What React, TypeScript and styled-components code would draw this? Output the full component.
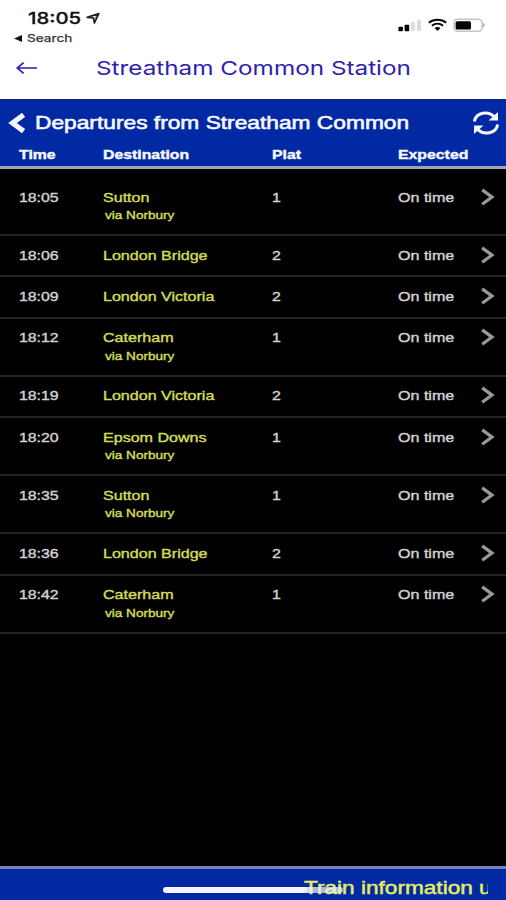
import React from "react";
import styled, { createGlobalStyle } from "styled-components";

const GlobalStyle = createGlobalStyle`
  * { box-sizing: border-box; }
  body { margin: 0; background: #fff; }
`;

const Screen = styled.div`
  width: 506px;
  height: 900px;
  display: flex;
  flex-direction: column;
  overflow: hidden;
  background: #fff;
  font-family: "Liberation Sans", Arial, sans-serif;
`;

const Wide = styled.span<{ $size: number; $stretch?: number; $stroke?: number }>`
  display: block;
  width: max-content;
  white-space: nowrap;
  font-size: ${(p) => p.$size}px;
  line-height: 20px;
  transform: scaleX(${(p) => p.$stretch ?? 1.19});
  transform-origin: left center;
  -webkit-text-stroke: ${(p) => p.$stroke ?? 0.4}px currentColor;
`;

const StatusBar = styled.div`
  height: 48px;
  padding: 8px 20px 0 14px;
  display: flex;
  justify-content: space-between;
  font-family: Inter, sans-serif;
  color: #111;
`;

const Clock = styled.div`
  display: flex;
  height: 21px;
  padding-left: 14px;
  font-weight: 500;
  svg { margin: 4px 0 0 16px; }
`;

const BackToApp = styled.div`
  display: flex;
  align-items: center;
  height: 19px;
  gap: 4px;
  color: #333;
`;

const Indicators = styled.div`
  display: flex;
  padding-top: 9px;
  height: 28px;
  gap: 6px;
`;

const NavBar = styled.div`
  height: 51px;
  display: flex;
  align-items: center;
  padding: 0 0 11px 16px;
  color: #2c22ae;
  font-family: Inter, sans-serif;
`;

const NavTitle = styled.div`
  margin: 1px 0 0 57.5px;
`;

const BoardHeader = styled.header`
  height: 70px;
  background: #0029a3;
  color: #f6f8ff;
  border-top: 1px solid #10207f;
  border-bottom: 3px solid #a0a3b6;
`;

const BoardTitle = styled.div`
  display: flex;
  align-items: center;
  height: 45px;
  padding: 1px 6px 0 8px;
`;

const TitleText = styled.div`
  flex: 1;
  padding-left: 8.5px;
`;

const columns = "84px 169px 126px 76px 1fr";

const ColumnTitles = styled.div`
  display: grid;
  grid-template-columns: ${columns};
  padding-left: 19px;
  font-weight: bold;
`;

const Board = styled.main`
  flex: 1;
  background: #000;
  padding-top: 9px;
`;

const Row = styled.div<{ $tall: boolean }>`
  display: grid;
  grid-template-columns: ${columns};
  align-content: start;
  height: ${(p) => (p.$tall ? 58.2 : 41.2)}px;
  padding: 9.6px 0 0 19px;
  border-bottom: 2px solid #242424;
  color: #d2d2d2;
`;

const Destination = styled.div`
  color: #d3dc58;
`;

const Via = styled.div`
  padding-left: 2px;
  margin-top: -2.4px;
`;

const ChevronCell = styled.div`
  padding: 0 0 0 6px;
  height: 20px;
`;

const Footer = styled.footer`
  height: 34px;
  background: #0029a3;
  border-top: 3px solid #7580b4;
  position: relative;
  padding: 9px 18px 0 304px;
`;

const Ticker = styled.div`
  overflow: hidden;
  color: #e5ec62;
`;

const HomeIndicator = styled.div`
  position: absolute;
  left: 163px;
  top: 18px;
  width: 180px;
  height: 6px;
  border-radius: 3px;
  background: linear-gradient(90deg, #f7f7ff 78%, rgba(240, 240, 235, 0.72) 84%);
`;

const departures: { time: string; to: string; via?: string; plat: string }[] = [
  { time: "18:05", to: "Sutton", via: "via Norbury", plat: "1" },
  { time: "18:06", to: "London Bridge", plat: "2" },
  { time: "18:09", to: "London Victoria", plat: "2" },
  { time: "18:12", to: "Caterham", via: "via Norbury", plat: "1" },
  { time: "18:19", to: "London Victoria", plat: "2" },
  { time: "18:20", to: "Epsom Downs", via: "via Norbury", plat: "1" },
  { time: "18:35", to: "Sutton", via: "via Norbury", plat: "1" },
  { time: "18:36", to: "London Bridge", plat: "2" },
  { time: "18:42", to: "Caterham", via: "via Norbury", plat: "1" },
];

const LocationArrow = () => (
  <svg width="15" height="13" viewBox="0 0 15 13">
    <path d="M1.2 5.4 12.8 1.6 8.4 11 7.4 6Z" fill="none" stroke="#222" strokeWidth="1.7" strokeLinejoin="round" />
    <path d="M7.4 6 12.8 1.6 8.4 11Z" fill="#222" fillOpacity="0.35" />
  </svg>
);

const Signal = () => (
  <svg width="24" height="15" viewBox="0 0 24 15">
    <rect x="0.4" y="9.7" width="4.6" height="4.5" rx="1" fill="#050505" />
    <rect x="6.6" y="7.7" width="4.6" height="6.5" rx="1" fill="#050505" />
    <rect x="13" y="5" width="4" height="9" rx="1" fill="#dcdcdc" />
    <rect x="19" y="2.5" width="4" height="11.5" rx="1" fill="#dcdcdc" />
  </svg>
);

const Wifi = () => (
  <svg width="19" height="15" viewBox="0 0 19 15" fill="none" stroke="#0a0a0a" strokeWidth="2">
    <path d="M.8 5.7C5.6 1.6 13.4 1.6 18.2 5.7" />
    <path d="M3.9 8.8C7.2 6.1 11.8 6.1 15.1 8.8" />
    <path d="M6.5 11 9.5 14 12.5 11C10.8 9.6 8.2 9.6 6.5 11Z" fill="#0a0a0a" stroke="none" />
  </svg>
);

const Battery = () => (
  <svg width="33" height="15" viewBox="0 0 33 15">
    <rect x="1" y="2.3" width="28" height="12" rx="3.5" fill="#fff" stroke="#c6c6c6" strokeWidth="1.6" />
    <rect x="2.6" y="4.2" width="15.4" height="8.2" rx="1.5" fill="#050505" />
    <path d="M30.2 5.8Q32.9 8.2 30.2 10.6Z" fill="#999" />
  </svg>
);

const Chevron = () => (
  <svg width="16" height="20" viewBox="0 0 16 20">
    <path d="M2.2 1.9 12 9.1 2.2 16.3" fill="none" stroke="#999" strokeWidth="3.2" />
  </svg>
);

export default function App() {
  return (
    <Screen>
      <GlobalStyle />
      <StatusBar>
        <div>
          <Clock>
            <Wide $size={16} $stretch={1.27} $stroke={0.3}>18:05</Wide>
            <LocationArrow />
          </Clock>
          <BackToApp>
            <svg width="9" height="7" viewBox="0 0 9 7"><path d="M0 3.5 8 0V7Z" fill="#111" /></svg>
            <Wide $size={10.5} $stretch={1.3} $stroke={0.25}>Search</Wide>
          </BackToApp>
        </div>
        <Indicators>
          <Signal />
          <Wifi />
          <Battery />
        </Indicators>
      </StatusBar>
      <NavBar>
        <svg width="22" height="14" viewBox="0 0 22 14" fill="none" stroke="currentColor" strokeWidth="1.7">
          <path d="M21 7H1.2M7.6 1.6 1.2 7 7.6 12.4" />
        </svg>
        <NavTitle>
          <Wide $size={19} $stretch={1.278} $stroke={0}>Streatham Common Station</Wide>
        </NavTitle>
      </NavBar>
      <BoardHeader>
        <BoardTitle>
          <svg width="18" height="20" viewBox="0 0 18 20">
            <path d="M15.6 1.8 4.6 10 15.6 18.2" fill="none" stroke="currentColor" strokeWidth="5.2" />
          </svg>
          <TitleText>
            <Wide $size={19} $stretch={1.197} $stroke={0.6}>Departures from Streatham Common</Wide>
          </TitleText>
          <svg width="28" height="24" viewBox="0 0 28 24" fill="none" stroke="currentColor" strokeWidth="3">
            <path d="M2.4 10.5C3.6 1.5 16.5-1 22.4 6" />
            <path d="M25.6 13.5C24.4 22.5 11.5 25 5.6 18" />
            <path d="M26 1V9.5H16.5Z" fill="currentColor" stroke="none" />
            <path d="M2 23V14.5H11.5Z" fill="currentColor" stroke="none" />
          </svg>
        </BoardTitle>
        <ColumnTitles>
          <Wide $size={13.3}>Time</Wide>
          <Wide $size={13.3}>Destination</Wide>
          <Wide $size={13.3}>Plat</Wide>
          <Wide $size={13.3}>Expected</Wide>
        </ColumnTitles>
      </BoardHeader>
      <Board>
        {departures.map((d) => (
          <Row key={d.time} $tall={!!d.via}>
            <Wide $size={13.3}>{d.time}</Wide>
            <Destination>
              <Wide $size={13.5}>{d.to}</Wide>
              {d.via && (
                <Via>
                  <Wide $size={11.4}>{d.via}</Wide>
                </Via>
              )}
            </Destination>
            <Wide $size={13.3}>{d.plat}</Wide>
            <Wide $size={13.5}>On time</Wide>
            <ChevronCell>
              <Chevron />
            </ChevronCell>
          </Row>
        ))}
      </Board>
      <Footer>
        <Ticker>
          <Wide $size={19} $stroke={0.5}>Train information u</Wide>
        </Ticker>
        <HomeIndicator />
      </Footer>
    </Screen>
  );
}
